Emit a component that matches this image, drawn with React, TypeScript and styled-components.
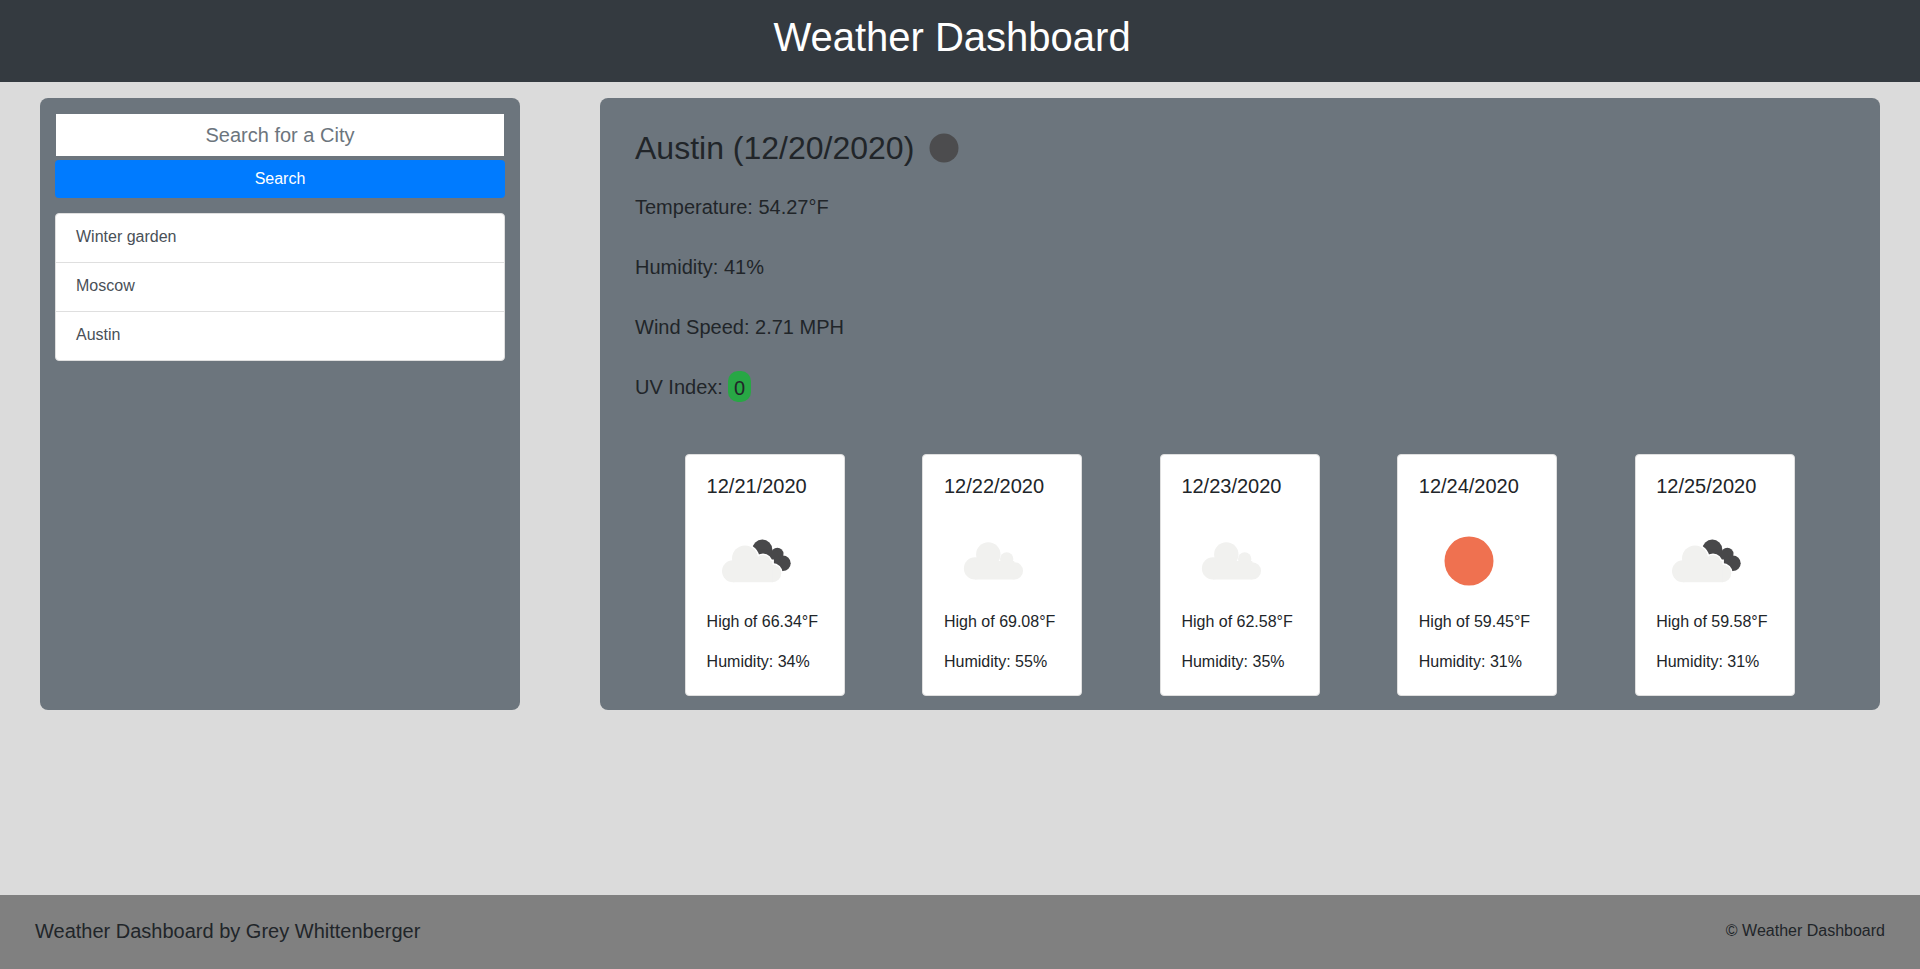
import React from 'react';
import styled, { createGlobalStyle } from 'styled-components';

const GlobalStyle = createGlobalStyle`
  html, body {
    margin: 0;
    padding: 0;
    background: #dbdbdb;
    color: #212529;
    font-family: "Liberation Sans", Arial, sans-serif;
    font-size: 16px;
    line-height: 1.5;
  }
  * { box-sizing: border-box; }
`;

type IconKind = 'night' | 'cloud' | 'sun';

const forecast: { date: string; icon: IconKind; high: string; humidity: string }[] = [
  { date: '12/21/2020', icon: 'night', high: '66.34', humidity: '34' },
  { date: '12/22/2020', icon: 'cloud', high: '69.08', humidity: '55' },
  { date: '12/23/2020', icon: 'cloud', high: '62.58', humidity: '35' },
  { date: '12/24/2020', icon: 'sun', high: '59.45', humidity: '31' },
  { date: '12/25/2020', icon: 'night', high: '59.58', humidity: '31' },
];

const cities = ['Winter garden', 'Moscow', 'Austin'];

const NightLightCloud = ({ fill, halo }: { fill: string; halo?: boolean }) => (
  <g fill={fill} stroke={halo ? '#fff' : 'none'} strokeWidth={halo ? 3 : 0}>
    <circle cx="26" cy="60.2" r="11" />
    <circle cx="38" cy="47.5" r="13" />
    <circle cx="56" cy="52" r="8" />
    <circle cx="65.4" cy="62.3" r="8.9" />
    <rect x="26" y="50" width="39.4" height="21.2" />
  </g>
);

const WeatherIcon = ({ kind }: { kind: IconKind }) => {
  if (kind === 'sun') {
    return (
      <IconSvg viewBox="0 0 100 88">
        <circle cx="50" cy="50" r="24.5" fill="#ef7150" />
      </IconSvg>
    );
  }
  if (kind === 'cloud') {
    return (
      <IconSvg viewBox="0 0 100 88">
        <g fill="#f1f1ef">
          <circle cx="31" cy="57.4" r="11.1" />
          <circle cx="44.3" cy="43.4" r="12.2" />
          <circle cx="62.7" cy="48" r="6.7" />
          <circle cx="70.3" cy="59.9" r="8.7" />
          <rect x="31" y="50" width="39.3" height="18.5" />
        </g>
      </IconSvg>
    );
  }
  return (
    <IconSvg viewBox="0 0 100 88">
      <g fill="#48484a">
        <circle cx="55.3" cy="38.5" r="10" />
        <circle cx="70.3" cy="43" r="6.2" />
        <circle cx="75.9" cy="52.3" r="7.8" />
        <path d="M50 38 L70 40 L76 60 L60 62 Z" />
      </g>
      <NightLightCloud fill="#fff" halo />
      <NightLightCloud fill="#f1f1ef" />
    </IconSvg>
  );
};

export default function App() {
  return (
    <>
      <GlobalStyle />
      <Page>
        <Header>
          <HeaderTitle>Weather Dashboard</HeaderTitle>
        </Header>
        <Main>
          <Sidebar>
            <SearchInput placeholder="Search for a City" />
            <SearchButton type="button">Search</SearchButton>
            <CityList>
              {cities.map((city) => (
                <CityItem key={city}>{city}</CityItem>
              ))}
            </CityList>
          </Sidebar>
          <Content>
            <CityTitle>
              Austin (12/20/2020)
              <MoonIcon viewBox="0 0 30 30">
                <circle cx="15" cy="15" r="14.5" fill="#4c4c4e" />
              </MoonIcon>
            </CityTitle>
            <Stat>Temperature: 54.27°F</Stat>
            <Stat>Humidity: 41%</Stat>
            <Stat>Wind Speed: 2.71 MPH</Stat>
            <Stat>
              UV Index: <UvBadge>0</UvBadge>
            </Stat>
            <CardRow>
              {forecast.map((day) => (
                <Card key={day.date}>
                  <CardDate>{day.date}</CardDate>
                  <WeatherIcon kind={day.icon} />
                  <CardText>High of {day.high}°F</CardText>
                  <CardText>Humidity: {day.humidity}%</CardText>
                </Card>
              ))}
            </CardRow>
          </Content>
        </Main>
        <Footer>
          <FooterName>Weather Dashboard by Grey Whittenberger</FooterName>
          <FooterCopy>© Weather Dashboard</FooterCopy>
        </Footer>
      </Page>
    </>
  );
}

const Page = styled.div`
  display: flex;
  flex-direction: column;
  min-height: 969px;
`;

const Header = styled.header`
  height: 82px;
  background: #343a40;
  display: flex;
  align-items: center;
  justify-content: center;
  padding: 0 16px 8px 0;
`;

const HeaderTitle = styled.h1`
  margin: 0;
  color: #fff;
  font-size: 40px;
  font-weight: 400;
  line-height: 1.2;
`;

const Main = styled.main`
  flex: 1;
  display: flex;
  align-items: flex-start;
  justify-content: space-between;
  padding: 16px 40px 0 40px;
`;

const Sidebar = styled.aside`
  width: 480px;
  height: 612px;
  background: #6c757d;
  border-radius: 8px;
  padding: 16px 15px;
  display: flex;
  flex-direction: column;
  align-items: center;
`;

const SearchInput = styled.input`
  width: 448px;
  height: 42px;
  border: none;
  outline: none;
  background: #fff;
  text-align: center;
  font-family: inherit;
  font-size: 20px;
  color: #495057;
  padding: 0;

  &::placeholder {
    color: #6c757d;
    opacity: 1;
  }
`;

const SearchButton = styled.button`
  width: 100%;
  height: 38px;
  margin-top: 4px;
  border: none;
  border-radius: 4px;
  background: #007bff;
  color: #fff;
  font-family: inherit;
  font-size: 16px;
`;

const CityList = styled.ul`
  width: 100%;
  margin: 15px 0 0;
  padding: 0;
  list-style: none;
  background: #fff;
  border: 1px solid #dfdfdf;
  border-radius: 4px;
`;

const CityItem = styled.li`
  height: 49px;
  padding: 11px 20px;
  color: #495057;
  border-top: 1px solid #dfdfdf;

  &:first-child {
    height: 48px;
    border-top: none;
  }
`;

const Content = styled.section`
  width: 1280px;
  height: 612px;
  background: #6c757d;
  border-radius: 8px;
  padding: 31px 35px 0;
`;

const CityTitle = styled.h2`
  margin: 0 0 25px;
  font-size: 32px;
  font-weight: 400;
  line-height: 1.2;
  display: flex;
  align-items: center;
`;

const MoonIcon = styled.svg`
  width: 30px;
  height: 30px;
  margin-left: 15px;
`;

const Stat = styled.p`
  margin: 0 0 30px;
  font-size: 20px;
  line-height: 30px;
  height: 30px;
`;

const UvBadge = styled.span`
  padding: 5.5px 5.5px 3.5px;
  border-radius: 10px;
  background: #28a745;
`;

const CardRow = styled.div`
  display: flex;
  justify-content: space-between;
  margin: 52px 50.4px 0 50px;
`;

const Card = styled.article`
  width: 160px;
  height: 242px;
  background: #fff;
  border: 1px solid #dfdfdf;
  border-radius: 4px;
  padding: 19px 20px 20px 20.6px;
`;

const CardDate = styled.div`
  font-size: 20px;
  line-height: 24px;
`;

const IconSvg = styled.svg`
  display: block;
  width: 100px;
  height: 88px;
  margin: 13px 0 11px 0.4px;
`;

const CardText = styled.p`
  margin: 0 0 16px;
  font-size: 16px;
  line-height: 24px;
  white-space: nowrap;
`;

const Footer = styled.footer`
  height: 74px;
  background: #808080;
  display: flex;
  align-items: center;
  justify-content: space-between;
  padding: 0 35px 2px 35px;
`;

const FooterName = styled.span`
  font-size: 20px;
`;

const FooterCopy = styled.span`
  font-size: 16px;
`;
